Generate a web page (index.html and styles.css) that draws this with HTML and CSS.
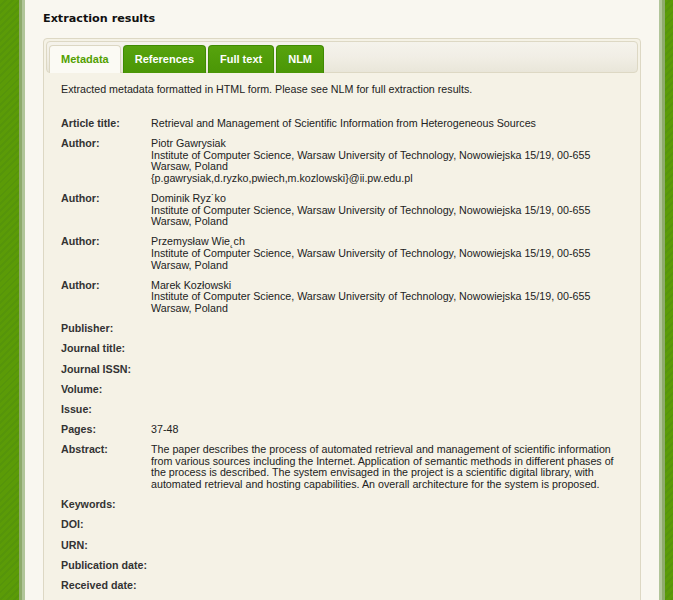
FILE: index.html
```html
<!DOCTYPE html>
<html>
<head>
<meta charset="utf-8">
<title>Extraction results</title>
<link rel="stylesheet" href="styles.css">
</head>
<body>
<div class="frame">
  <div class="page">
    <h2 class="title">Extraction results</h2>
    <div class="tabs">
      <ul class="tab-nav">
        <li class="tab active">Metadata</li>
        <li class="tab">References</li>
        <li class="tab">Full text</li>
        <li class="tab">NLM</li>
      </ul>
      <div class="panel">
        <p class="intro">Extracted metadata formatted in HTML form. Please see NLM for full extraction results.</p>
        <div class="meta">
          <div class="label">Article title:</div>
          <div class="value">Retrieval and Management of Scientific Information from Heterogeneous Sources</div>

          <div class="label">Author:</div>
          <div class="value">Piotr Gawrysiak<br>Institute of Computer Science, Warsaw University of Technology, Nowowiejska 15/19, 00-655 Warsaw, Poland<br>{p.gawrysiak,d.ryzko,pwiech,m.kozlowski}@ii.pw.edu.pl</div>

          <div class="label">Author:</div>
          <div class="value">Dominik Ryz˙ko<br>Institute of Computer Science, Warsaw University of Technology, Nowowiejska 15/19, 00-655 Warsaw, Poland</div>

          <div class="label">Author:</div>
          <div class="value">Przemysław Wie˛ch<br>Institute of Computer Science, Warsaw University of Technology, Nowowiejska 15/19, 00-655 Warsaw, Poland</div>

          <div class="label">Author:</div>
          <div class="value">Marek Kozłowski<br>Institute of Computer Science, Warsaw University of Technology, Nowowiejska 15/19, 00-655 Warsaw, Poland</div>

          <div class="label">Publisher:</div>
          <div class="value"></div>

          <div class="label">Journal title:</div>
          <div class="value"></div>

          <div class="label">Journal ISSN:</div>
          <div class="value"></div>

          <div class="label">Volume:</div>
          <div class="value"></div>

          <div class="label">Issue:</div>
          <div class="value"></div>

          <div class="label">Pages:</div>
          <div class="value">37-48</div>

          <div class="label">Abstract:</div>
          <div class="value">The paper describes the process of automated retrieval and management of scientific information from various sources including the Internet. Application of semantic methods in different phases of the process is described. The system envisaged in the project is a scientific digital library, with automated retrieval and hosting capabilities. An overall architecture for the system is proposed.</div>

          <div class="label">Keywords:</div>
          <div class="value"></div>

          <div class="label">DOI:</div>
          <div class="value"></div>

          <div class="label">URN:</div>
          <div class="value"></div>

          <div class="label">Publication date:</div>
          <div class="value"></div>

          <div class="label">Received date:</div>
          <div class="value"></div>
        </div>
      </div>
    </div>
  </div>
</div>
</body>
</html>
```
FILE: styles.css
```css
html, body {
  margin: 0;
  padding: 0;
}
body {
  background-color: #5b9b07;
  background-image: repeating-linear-gradient(135deg, #5b9b07 0px, #5b9b07 3px, #56950a 3px, #56950a 5px);
  min-height: 600px;
  font-family: "Liberation Sans", Arial, sans-serif;
  font-size: 10.7px;
  color: #333;
}
.frame {
  margin-left: 19px;
  width: 640px;
  border-left: 3px solid #8eab6c;
  border-right: 3px solid #8eab6c;
  min-height: 600px;
}
.page {
  border-left: 3px solid #b1c599;
  border-right: 3px solid #b1c599;
  background: #f9f7f0;
  min-height: 600px;
  padding: 12px 18px 0 18px;
}
.title {
  margin: 0 0 13px 0;
  font-family: "DejaVu Sans", Verdana, sans-serif;
  font-size: 11.2px;
  line-height: 13px;
  font-weight: bold;
  color: #111;
}
.tabs {
  border: 1px solid #ddd8c4;
  border-radius: 4px;
  background: #f5f2e6;
  padding: 2px;
}
.tab-nav {
  list-style: none;
  margin: 0;
  padding: 3px 2px 0 2px;
  display: flex;
  gap: 2px;
  height: 27px;
  border: 1px solid #ddd8c4;
  border-radius: 4px;
  background: linear-gradient(#f5f3ec, #f1eee5 50%, #e9e6d9);
}
.tab {
  height: 28px;
  box-sizing: border-box;
  padding: 0 11px;
  border: 1px solid #3f8a02;
  border-bottom: none;
  border-radius: 4px 4px 0 0;
  background: linear-gradient(#57a30d, #4a9606);
  color: #fff;
  font-weight: bold;
  font-size: 11px;
  line-height: 27px;
  margin-bottom: -1px;
}
.tab.active {
  background: #fbfaf4;
  border-color: #dcd7c3;
  color: #52a000;
}
.panel {
  padding: 11px 15px 20px 15px;
}
.intro {
  margin: 0 0 18px 0;
  line-height: 11.6px;
  color: #222;
}
.meta {
  display: grid;
  grid-template-columns: 90px 470px;
}
.label, .value {
  padding: 4.3px 0;
  line-height: 11.6px;
  min-height: 11.6px;
}
.label {
  font-weight: bold;
  color: #333;
}
.value {
  color: #222;
}
```
